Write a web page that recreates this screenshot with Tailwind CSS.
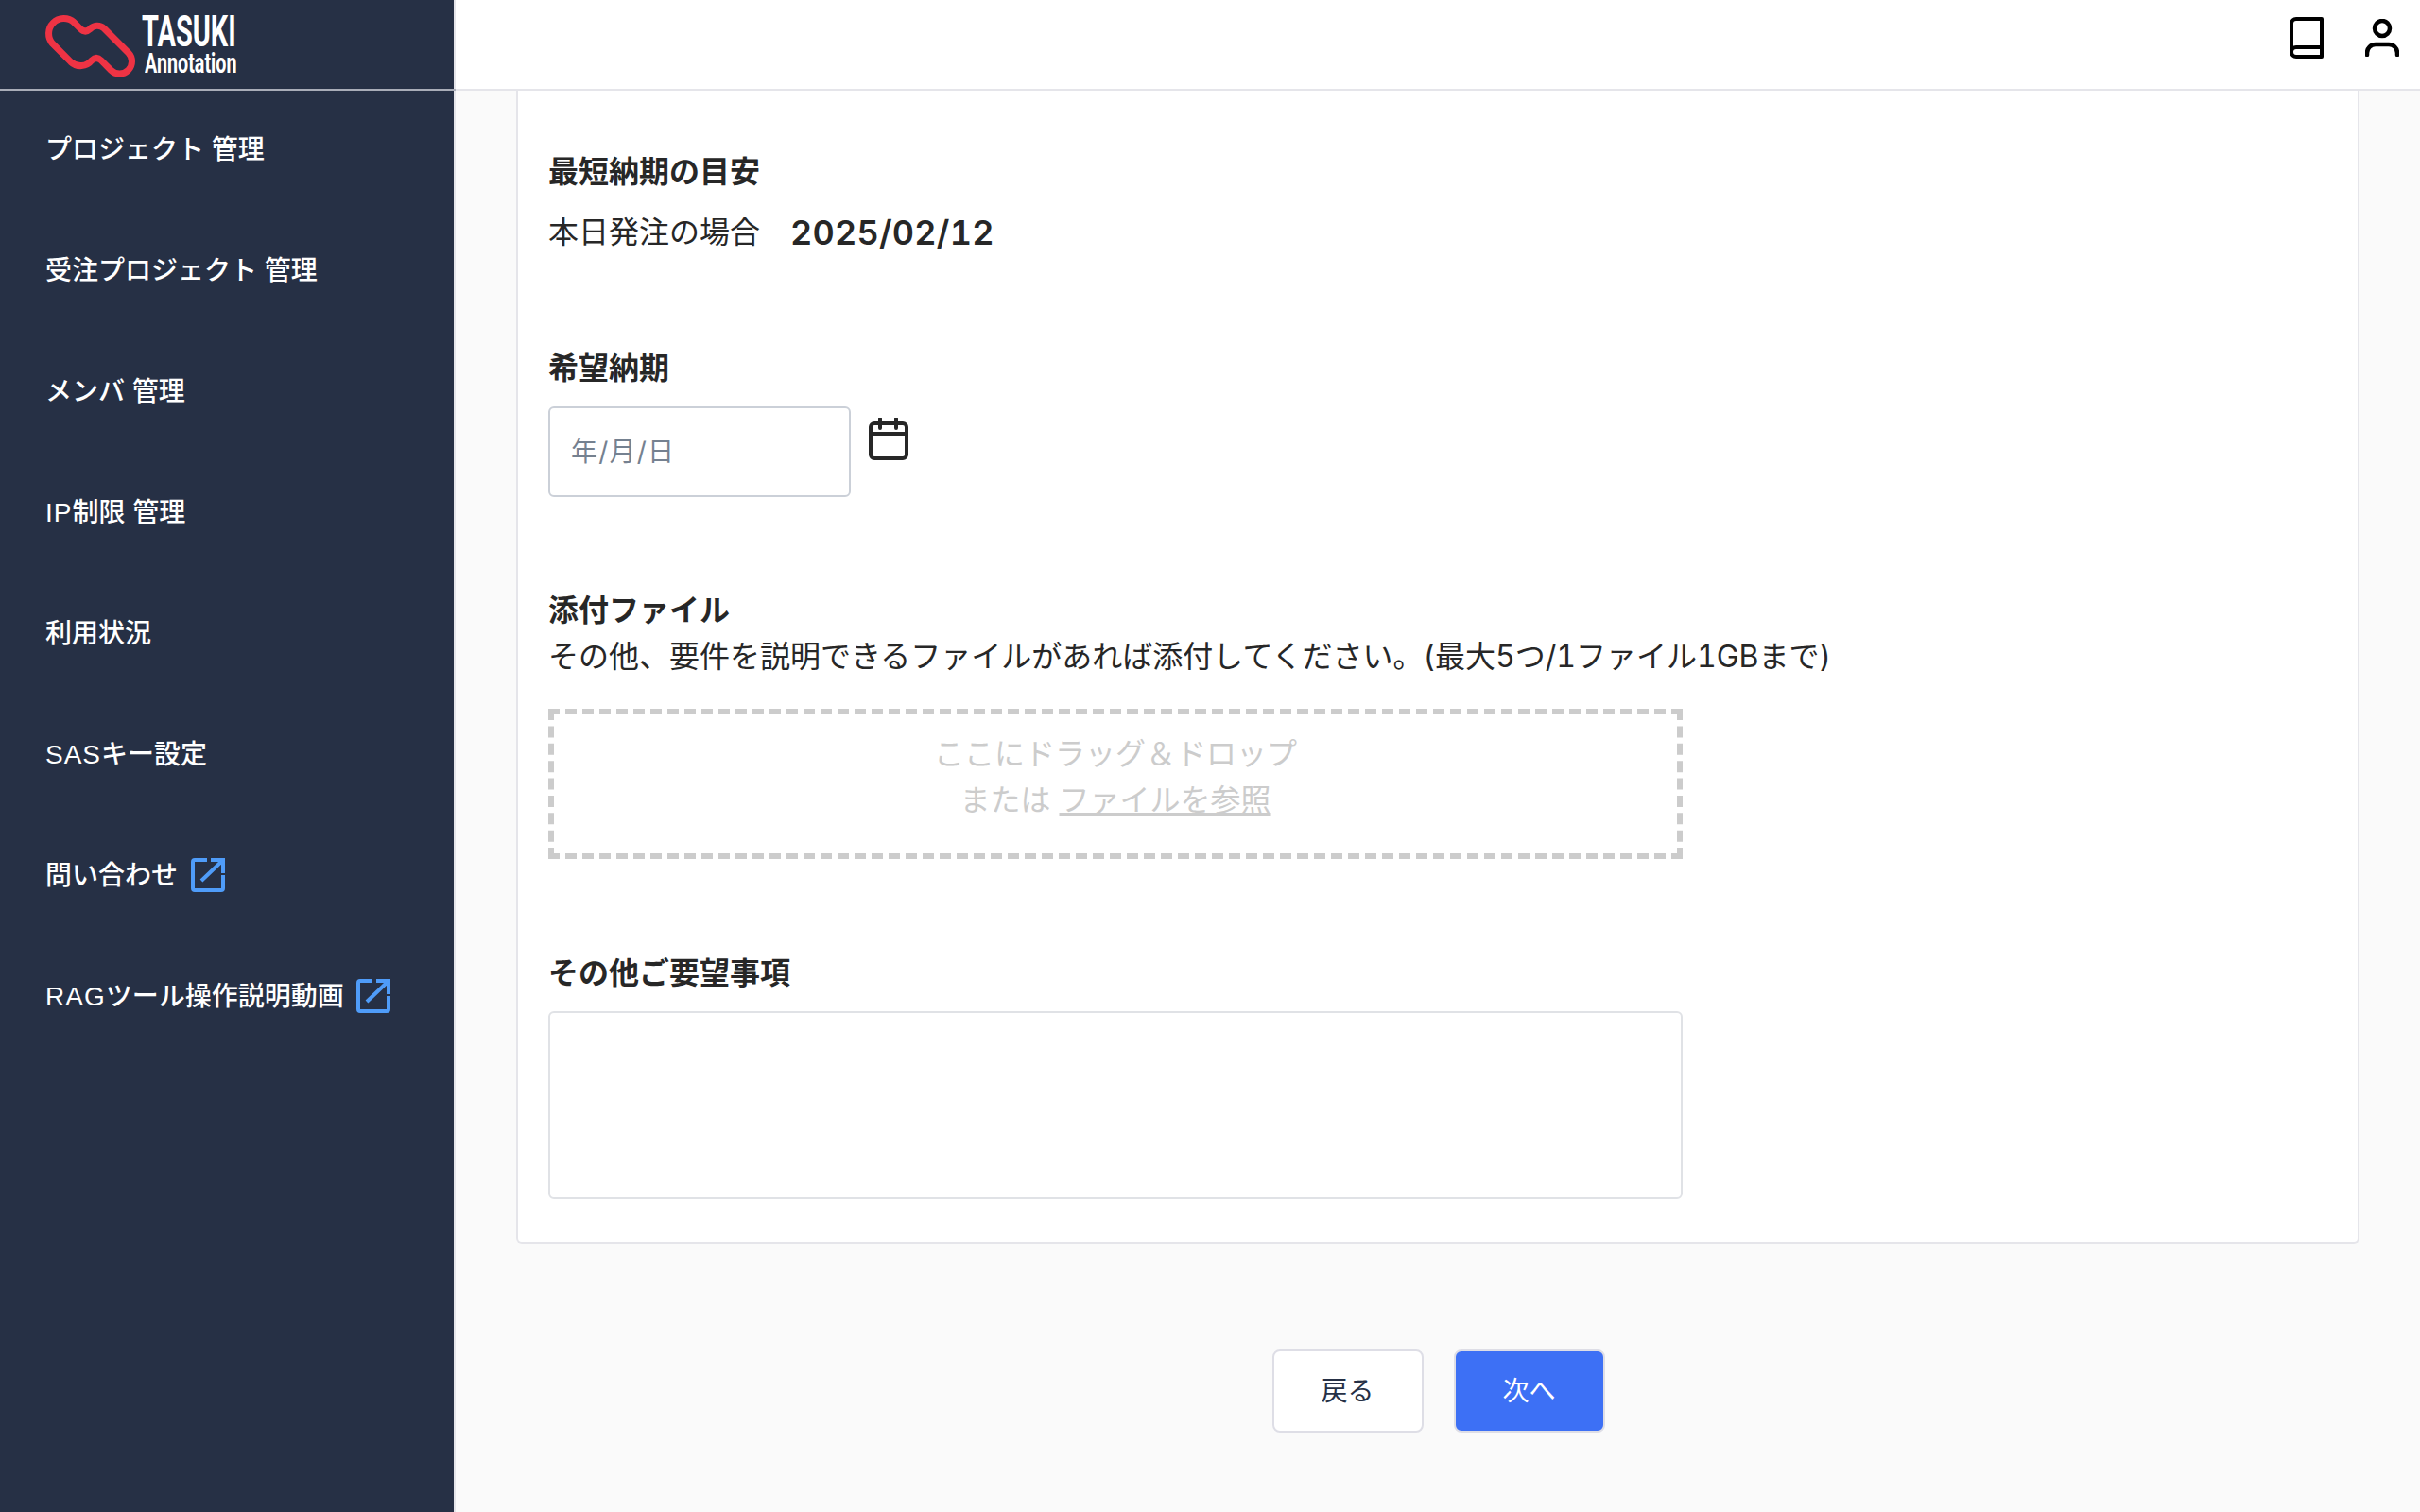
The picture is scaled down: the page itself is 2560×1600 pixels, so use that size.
<!DOCTYPE html>
<html lang="ja">
<head>
    <meta charset="UTF-8">
    <title>TASUKI Annotation</title>
    <script src="https://cdn.jsdelivr.net/npm/@tailwindcss/browser@4"></script>
</head>
<body class="font-['Inter','Noto_Sans_CJK_JP',sans-serif] text-[#272727] bg-[#fafafa]">
    <div class="flex h-[1600px] overflow-hidden">
        <!-- Sidebar -->
        <aside class="w-[482px] shrink-0 bg-[#263045] border-r-2 border-[#e5e5ea] text-white">
            <div class="h-[96px] border-b-2 border-[#a9adb8] flex items-start pl-[46px] pt-[14px] gap-[4px] w-[482px] -mr-[2px]">
                <svg class="w-[100px] h-[70px] shrink-0" viewBox="46 14 100 70" fill="none" stroke="#ee3344" stroke-width="7" stroke-linejoin="round">
                    <path d="M78.3 23.7L85 30.4Q90 35.4 95 30.9A10.5 10.5 0 0 1 110 30L135.7 55.8A13 13 0 0 1 117.3 74.2L107 63.9Q102 59 97 63.9A15 15 0 0 1 75 65.6L55.7 46.3A16 16 0 0 1 78.3 23.7Z"/>
                </svg>
                <div class="w-[100px] font-['Roboto',sans-serif] font-bold">
                    <div class="text-[46px] leading-[38px] scale-x-[0.63] origin-left whitespace-nowrap">TASUKI</div>
                    <div class="text-[29px] leading-[30px] scale-x-[0.68] origin-left whitespace-nowrap ml-[3px]">Annotation</div>
                </div>
            </div>
            <nav class="flex flex-col text-[28px] font-medium font-['Liberation_Sans','Noto_Sans_CJK_JP',sans-serif]">
                <a class="h-[128px] flex items-center pl-[48px] -mt-[1px]">プロジェクト 管理</a>
                <a class="h-[128px] flex items-center pl-[48px]">受注プロジェクト 管理</a>
                <a class="h-[128px] flex items-center pl-[48px]">メンバ 管理</a>
                <a class="h-[128px] flex items-center pl-[48px]"><span><span class="tracking-[1px]">IP</span>制限 管理</span></a>
                <a class="h-[128px] flex items-center pl-[48px]">利用状況</a>
                <a class="h-[128px] flex items-center pl-[48px]"><span><span class="tracking-[1px]">SAS</span>キー設定</span></a>
                <a class="h-[128px] flex items-center pl-[48px] gap-[14px]">問い合わせ
                    <svg class="w-[36px] h-[36px] mb-[3px]" viewBox="0 0 36 36" fill="none" stroke="#4f9cf9" stroke-width="4">
                        <path d="M17 2H4a2 2 0 0 0-2 2v28a2 2 0 0 0 2 2h28a2 2 0 0 0 2-2V18"/>
                        <path d="M11 24L33 3M21 2H34V16"/>
                    </svg>
                </a>
                <a class="h-[128px] flex items-center pl-[48px] gap-[13px]"><span><span class="tracking-[1px]">RAG</span>ツール操作説明動画</span>
                    <svg class="w-[36px] h-[36px] mb-[3px]" viewBox="0 0 36 36" fill="none" stroke="#4f9cf9" stroke-width="4">
                        <path d="M17 2H4a2 2 0 0 0-2 2v28a2 2 0 0 0 2 2h28a2 2 0 0 0 2-2V18"/>
                        <path d="M11 24L33 3M21 2H34V16"/>
                    </svg>
                </a>
            </nav>
        </aside>

        <div class="flex-1 flex flex-col min-w-0">
            <!-- Header -->
            <header class="h-[96px] shrink-0 bg-white border-b-2 border-[#e5e5ea] flex items-start justify-end pt-[18px] pr-[22px] gap-[44px]">
                <svg class="w-[36px] h-[44px]" viewBox="0 0 36 44" fill="none" stroke="#000" stroke-width="4" stroke-linejoin="round" stroke-linecap="round">
                    <path d="M7 2H34V42H7a5 5 0 0 1-5-5V7a5 5 0 0 1 5-5Z"/>
                    <path d="M2 37a5 5 0 0 1 5-5H34"/>
                </svg>
                <svg class="w-[36px] h-[40px] mt-[2px]" viewBox="0 0 36 40" fill="none" stroke="#000" stroke-width="4.5" stroke-linecap="round">
                    <circle cx="18" cy="10" r="8"/>
                    <path d="M2 38v-2a9 9 0 0 1 9-9h14a9 9 0 0 1 9 9v2"/>
                </svg>
            </header>

            <!-- Content -->
            <main class="flex-1 px-[64px]">
                <div class="w-[1950px] h-[1220px] bg-white border-2 border-t-0 border-[#e5e5ea] rounded-b-[6px] pl-[32px]">
                    <section class="pt-[62px]">
                        <h2 class="text-[32px] font-bold leading-[48px]">最短納期の目安</h2>
                        <div class="flex items-center mt-[16px] h-[48px]">
                            <span class="text-[32px]">本日発注の場合</span>
                            <span class="text-[36px] font-semibold ml-[32px] tabular-nums tracking-[0.2px]">2025/02/12</span>
                        </div>
                    </section>
                    <section class="mt-[96px]">
                        <h2 class="text-[32px] font-bold leading-[48px]">希望納期</h2>
                        <div class="flex items-start gap-[18px] mt-[16px]">
                            <div class="w-[320px] h-[96px] bg-white border-2 border-[#cbd0d8] rounded-[6px] flex items-center pl-[22px] text-[28px] tracking-[1.2px] text-[#758190]">年/月/日</div>
                            <svg class="w-[44px] h-[46px] mt-[12px]" viewBox="0 0 44 46" fill="none" stroke="#272727" stroke-width="4">
                                <rect x="3" y="6" width="38" height="37" rx="4"/>
                                <path d="M3 17H41"/>
                                <path d="M13 1V11M30 1V11" stroke-linecap="round"/>
                            </svg>
                        </div>
                    </section>
                    <section class="mt-[96px]">
                        <h2 class="text-[32px] font-bold leading-[48px]">添付ファイル</h2>
                        <p class="text-[32px] leading-[48px] mt-[1px] tabular-nums">その他、要件を説明できるファイルがあれば添付してください。(最大5つ/1ファイル1GBまで)</p>
                        <div class="w-[1200px] h-[159px] mt-[31px] pb-[16px] border-[6px] border-dashed border-[#cccccc] flex flex-col items-center justify-center text-[32px] leading-[49px] text-[#cccccc]">
                            <div>ここにドラッグ＆ドロップ</div>
                            <div>または <span class="underline">ファイルを参照</span></div>
                        </div>
                    </section>
                    <section class="mt-[97px]">
                        <h2 class="text-[32px] font-bold leading-[48px]">その他ご要望事項</h2>
                        <div class="w-[1200px] h-[199px] mt-[16px] bg-white border-2 border-[#e0e2e6] rounded-[6px]"></div>
                    </section>
                </div>
                <div class="flex justify-center gap-[32px] mt-[112px] pl-[1px]">
                    <button class="w-[160px] h-[88px] bg-white border-2 border-[#dedee6] rounded-[8px] text-[28px] text-[#263045]">戻る</button>
                    <button class="w-[160px] h-[88px] bg-[#3d70f5] border-2 border-[#dedee6] rounded-[8px] text-[28px] text-white">次へ</button>
                </div>
            </main>
        </div>
    </div>
</body>
</html>
